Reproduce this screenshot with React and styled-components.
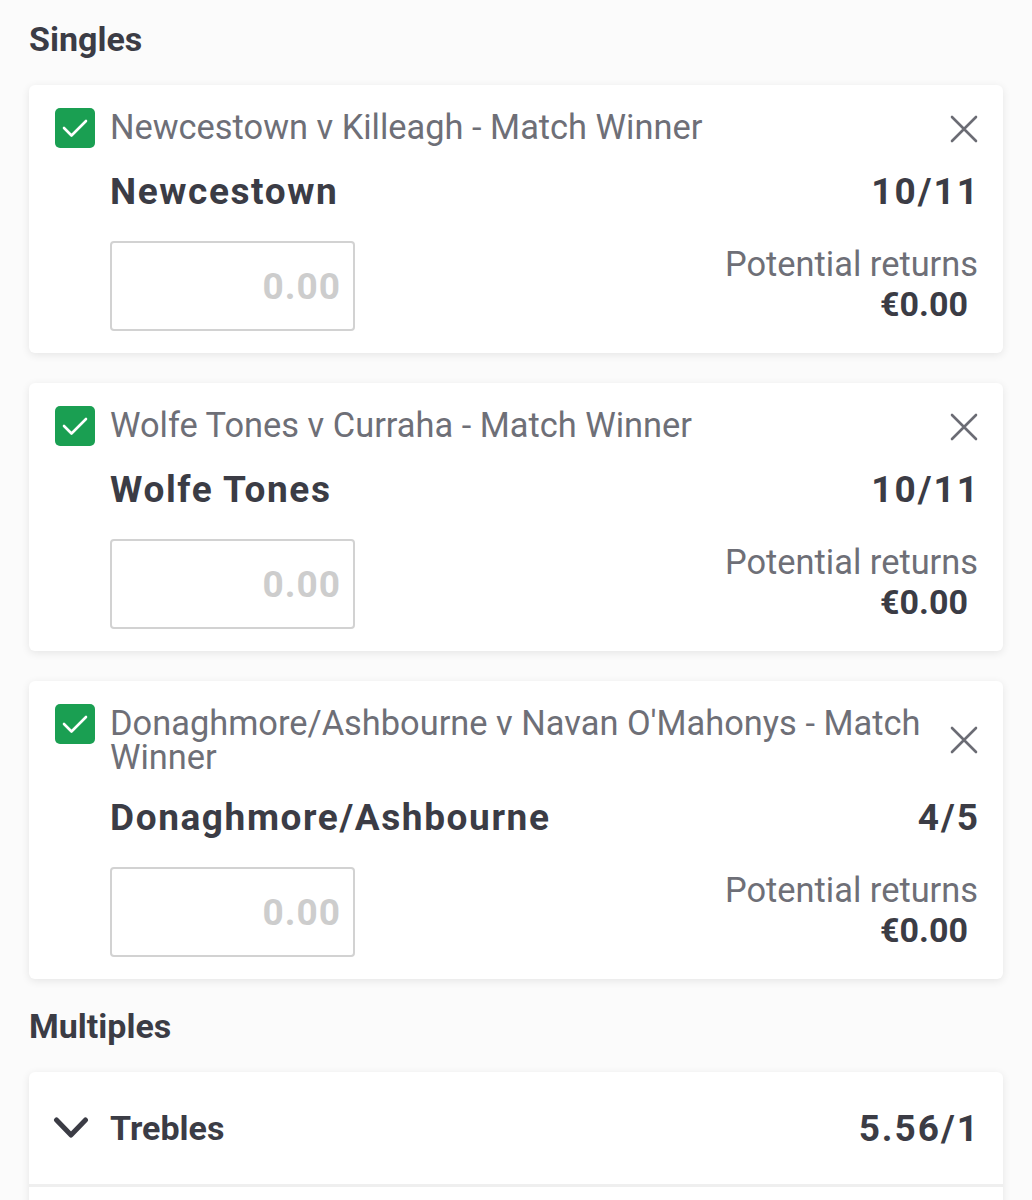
import styled, { createGlobalStyle } from 'styled-components';

const GlobalStyle = createGlobalStyle`
  body {
    margin: 0;
    background: #fbfbfb;
    font-family: Roboto, "Liberation Sans", Arial, sans-serif;
    color: #3b3c45;
  }
`;

const Page = styled.div`
  padding: 0 29px;
  height: 1200px;
  overflow: hidden;
`;

const SectionTitle = styled.h2`
  margin: ${props => props.top}px 0 26px 0;
  font-size: 34px;
  line-height: 40px;
  font-weight: 700;
  color: #3b3c45;
`;

const Card = styled.div`
  background: #fff;
  border-radius: 6px;
  box-shadow: 0 2px 8px rgba(0, 0, 0, 0.09);
  padding: 21px 25px 22px 26px;
  margin-bottom: 30px;
`;

const Header = styled.div`
  display: flex;
  align-items: flex-start;
`;

const Check = styled.div`
  flex: none;
  width: 40px;
  height: 40px;
  margin-top: 2px;
  border-radius: 5px;
  background: #1a9f52;
  display: flex;
  align-items: center;
  justify-content: center;
`;

const EventName = styled.div`
  flex: 1;
  margin-left: 15px;
  padding-top: 4px;
  font-size: 34.4px;
  line-height: 34px;
  color: #6e6f77;
`;

const Close = styled.button`
  flex: none;
  align-self: center;
  width: 28px;
  height: 28px;
  padding: 0;
  margin: 4px 0 0 20px;
  border: 0;
  background: none;
  display: flex;
  align-items: center;
  justify-content: center;
`;

const Body = styled.div`
  padding-left: 55px;
`;

const SelectionRow = styled.div`
  display: flex;
  justify-content: space-between;
  align-items: center;
  margin-top: 24px;
  font-size: 37px;
  line-height: 40px;
  font-weight: 700;
  letter-spacing: 1.6px;
  color: #3b3c45;
`;

const Odds = styled.span`
  letter-spacing: 2px;
  margin-right: -2px;
`;

const StakeRow = styled.div`
  display: flex;
  justify-content: space-between;
  align-items: center;
  margin-top: 29px;
`;

const StakeInput = styled.div`
  width: 245px;
  height: 90px;
  box-sizing: border-box;
  border: 2px solid #d2d2d2;
  border-radius: 4px;
  display: flex;
  align-items: center;
  justify-content: flex-end;
  padding-right: 12px;
  font-size: 37px;
  font-weight: 700;
  letter-spacing: 1px;
  color: #cdcdcd;
`;

const Returns = styled.div`
  text-align: right;
  line-height: 40px;
  margin-top: -4px;
`;

const ReturnsLabel = styled.div`
  font-size: 34.4px;
  color: #6e6f77;
`;

const ReturnsValue = styled.div`
  font-size: 34px;
  font-weight: 700;
  color: #3b3c45;
  padding-right: 10px;
`;

const MultipleCard = styled(Card)`
  padding: 0;
  margin-bottom: 0;
  height: 200px;
`;

const MultipleRow = styled.div`
  height: 112px;
  display: flex;
  align-items: center;
  padding: 0 25px 0 24px;
  border-bottom: 3px solid #efefef;
  font-size: 34px;
  font-weight: 700;
  color: #3b3c45;
`;

const MultipleName = styled.div`
  flex: 1;
  margin-left: 21px;
`;

const MultipleOdds = styled.span`
  font-size: 37px;
  letter-spacing: 2px;
  margin-right: -2px;
`;

const Tick = () => (
  <svg width="28" height="22" viewBox="0 0 28 22">
    <path d="M3 11 L10.5 18.5 L25 4" fill="none" stroke="#fff" strokeWidth="2.6" strokeLinecap="round" strokeLinejoin="round" />
  </svg>
);

const Cross = () => (
  <svg width="28" height="28" viewBox="0 0 28 28">
    <path d="M2 2 L26 26 M26 2 L2 26" fill="none" stroke="#6b6c74" strokeWidth="2.6" strokeLinecap="round" />
  </svg>
);

const Chevron = () => (
  <svg width="36" height="24" viewBox="0 0 36 24">
    <path d="M3.5 4 L18 19 L32.5 4" fill="none" stroke="#3b3c45" strokeWidth="5" strokeLinecap="round" strokeLinejoin="round" />
  </svg>
);

const singles = [
  { event: 'Newcestown v Killeagh - Match Winner', pick: 'Newcestown', odds: '10/11' },
  { event: 'Wolfe Tones v Curraha - Match Winner', pick: 'Wolfe Tones', odds: '10/11' },
  { event: "Donaghmore/Ashbourne v Navan O'Mahonys - Match Winner", pick: 'Donaghmore/Ashbourne', odds: '4/5' },
];

function BetCard({ bet }) {
  return (
    <Card>
      <Header>
        <Check><Tick /></Check>
        <EventName>{bet.event}</EventName>
        <Close><Cross /></Close>
      </Header>
      <Body>
        <SelectionRow>
          <span>{bet.pick}</span>
          <Odds>{bet.odds}</Odds>
        </SelectionRow>
        <StakeRow>
          <StakeInput>0.00</StakeInput>
          <Returns>
            <ReturnsLabel>Potential returns</ReturnsLabel>
            <ReturnsValue>€0.00</ReturnsValue>
          </Returns>
        </StakeRow>
      </Body>
    </Card>
  );
}

export default function App() {
  return (
    <>
      <GlobalStyle />
      <Page>
        <SectionTitle top={19}>Singles</SectionTitle>
        {singles.map(bet => <BetCard key={bet.pick} bet={bet} />)}
        <SectionTitle top={-3}>Multiples</SectionTitle>
        <MultipleCard>
          <MultipleRow>
            <Chevron />
            <MultipleName>Trebles</MultipleName>
            <MultipleOdds>5.56/1</MultipleOdds>
          </MultipleRow>
        </MultipleCard>
      </Page>
    </>
  );
}
